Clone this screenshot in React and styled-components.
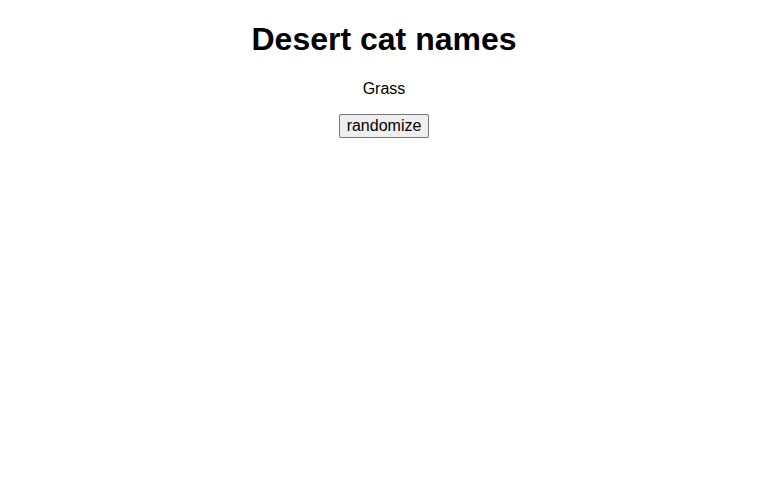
import React, { useState } from "react";
import styled, { createGlobalStyle } from "styled-components";

const Global = createGlobalStyle`
  html, body {
    margin: 0;
    padding: 0;
    font-family: "Liberation Sans", Arial, sans-serif;
    background: #ffffff;
    color: #000000;
  }
`;

const Page = styled.div`
  text-align: center;
  padding: 0 8px;
`;

const Title = styled.h1`
  font-size: 32px;
  font-weight: bold;
  margin: 21.44px 0;
`;

const Name = styled.p`
  font-size: 16px;
  margin: 16px 0;
`;

const Controls = styled.div`
  margin: 0;
`;

const Button = styled.button`
  font-family: "Liberation Sans", Arial, sans-serif;
  font-size: 16px;
  line-height: 18px;
  padding: 2px 7px;
  background: #efefef;
  border: 1px solid #767676;
  border-radius: 2px;
  color: #000;
  cursor: pointer;
`;

const names = ["Grass", "Sandy", "Dune", "Cactus", "Mirage", "Sahara"];

export default function App() {
  const [name, setName] = useState("Grass");
  return (
    <Page>
      <Global />
      <Title>Desert cat names</Title>
      <Name>{name}</Name>
      <Controls>
        <Button onClick={() => setName(names[Math.floor(Math.random() * names.length)])}>
          randomize
        </Button>
      </Controls>
    </Page>
  );
}
